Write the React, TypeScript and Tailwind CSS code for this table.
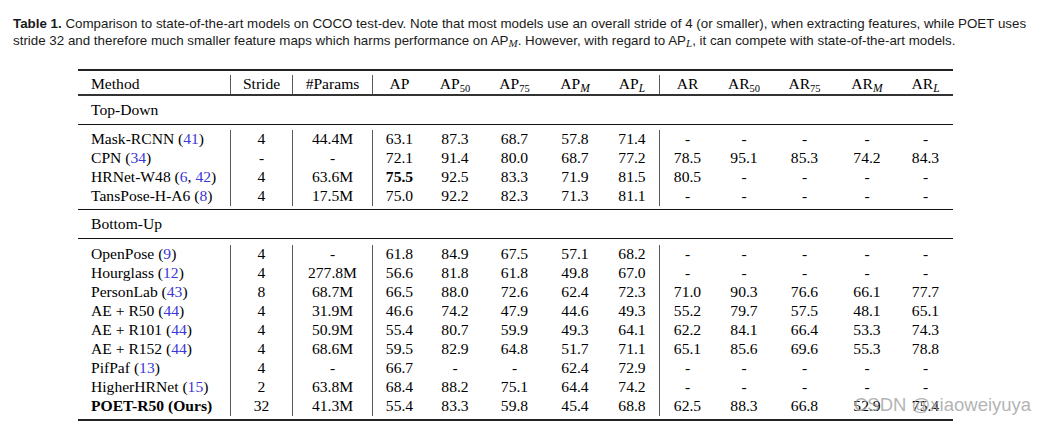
import React from "react";

type Row = {
  name: string;
  cites: string[];
  bold?: boolean;
  stride: string;
  params: string;
  vals: string[];
  boldIdx?: number[];
};

const topDown: Row[] = [
  { name: "Mask-RCNN", cites: ["41"], stride: "4", params: "44.4M", vals: ["63.1", "87.3", "68.7", "57.8", "71.4", "-", "-", "-", "-", "-"] },
  { name: "CPN", cites: ["34"], stride: "-", params: "-", vals: ["72.1", "91.4", "80.0", "68.7", "77.2", "78.5", "95.1", "85.3", "74.2", "84.3"] },
  { name: "HRNet-W48", cites: ["6", "42"], stride: "4", params: "63.6M", vals: ["75.5", "92.5", "83.3", "71.9", "81.5", "80.5", "-", "-", "-", "-"], boldIdx: [0] },
  { name: "TansPose-H-A6", cites: ["8"], stride: "4", params: "17.5M", vals: ["75.0", "92.2", "82.3", "71.3", "81.1", "-", "-", "-", "-", "-"] },
];

const bottomUp: Row[] = [
  { name: "OpenPose", cites: ["9"], stride: "4", params: "-", vals: ["61.8", "84.9", "67.5", "57.1", "68.2", "-", "-", "-", "-", "-"] },
  { name: "Hourglass", cites: ["12"], stride: "4", params: "277.8M", vals: ["56.6", "81.8", "61.8", "49.8", "67.0", "-", "-", "-", "-", "-"] },
  { name: "PersonLab", cites: ["43"], stride: "8", params: "68.7M", vals: ["66.5", "88.0", "72.6", "62.4", "72.3", "71.0", "90.3", "76.6", "66.1", "77.7"] },
  { name: "AE + R50", cites: ["44"], stride: "4", params: "31.9M", vals: ["46.6", "74.2", "47.9", "44.6", "49.3", "55.2", "79.7", "57.5", "48.1", "65.1"] },
  { name: "AE + R101", cites: ["44"], stride: "4", params: "50.9M", vals: ["55.4", "80.7", "59.9", "49.3", "64.1", "62.2", "84.1", "66.4", "53.3", "74.3"] },
  { name: "AE + R152", cites: ["44"], stride: "4", params: "68.6M", vals: ["59.5", "82.9", "64.8", "51.7", "71.1", "65.1", "85.6", "69.6", "55.3", "78.8"] },
  { name: "PifPaf", cites: ["13"], stride: "4", params: "-", vals: ["66.7", "-", "-", "62.4", "72.9", "-", "-", "-", "-", "-"] },
  { name: "HigherHRNet", cites: ["15"], stride: "2", params: "63.8M", vals: ["68.4", "88.2", "75.1", "64.4", "74.2", "-", "-", "-", "-", "-"] },
  { name: "POET-R50 (Ours)", cites: [], bold: true, stride: "32", params: "41.3M", vals: ["55.4", "83.3", "59.8", "45.4", "68.8", "62.5", "88.3", "66.8", "52.9", "75.4"] },
];

const GRID =
  "grid grid-cols-[152px_62px_80px_54px_58px_61px_60px_54px_56px_58px_63px_62px_55px]";
const VL = "border-l border-[#5a5a5a]";

function Method({ r }: { r: Row }) {
  if (r.bold) return <span className="font-bold">{r.name}</span>;
  return (
    <span>
      {r.name} (
      {r.cites.map((c, i) => (
        <React.Fragment key={i}>
          {i > 0 ? ", " : ""}
          <span className="text-[#3a36d8]">{c}</span>
        </React.Fragment>
      ))}
      )
    </span>
  );
}

function DataRow({ r }: { r: Row }) {
  return (
    <div className={`${GRID} h-[19px] leading-[17px]`}>
      <div className="pl-[13px] whitespace-nowrap">
        <Method r={r} />
      </div>
      <div className={`${VL} text-center`}>{r.stride}</div>
      <div className={`${VL} text-center`}>{r.params}</div>
      {r.vals.map((v, i) => (
        <div
          key={i}
          className={`text-center ${i === 0 || i === 5 ? VL : ""} ${
            r.boldIdx && r.boldIdx.includes(i) ? "font-bold" : ""
          }`}
        >
          {v}
        </div>
      ))}
    </div>
  );
}

function Sub({ children, italic }: { children: React.ReactNode; italic?: boolean }) {
  return (
    <sub className={`text-[10.5px] ${italic ? "italic text-[11.5px]" : ""}`}>{children}</sub>
  );
}

export default function App() {
  const headers: React.ReactNode[] = [
    <>AP</>,
    <>AP<Sub>50</Sub></>,
    <>AP<Sub>75</Sub></>,
    <>AP<Sub italic>M</Sub></>,
    <>AP<Sub italic>L</Sub></>,
    <>AR</>,
    <>AR<Sub>50</Sub></>,
    <>AR<Sub>75</Sub></>,
    <>AR<Sub italic>M</Sub></>,
    <>AR<Sub italic>L</Sub></>,
  ];
  return (
    <div className="relative w-[1045px] h-[425px] bg-white overflow-hidden">
      <div
        className="pl-[13px] pt-[16px] text-[13.35px] leading-[16.5px] text-[#1a1a1a] h-[69px] whitespace-nowrap"
        style={{ fontFamily: '"Liberation Sans", Arial, sans-serif' }}
      >
        <span className="font-bold">Table 1.</span> Comparison to state-of-the-art models on COCO
        test-dev. Note that most models use an overall stride of 4 (or smaller), when extracting
        features, while POET uses
        <br />
        stride 32 and therefore much smaller feature maps which harms performance on AP
        <sub className="italic text-[11px]" style={{ fontFamily: '"Liberation Serif", serif' }}>
          M
        </sub>
        . However, with regard to AP
        <sub className="italic text-[11px]" style={{ fontFamily: '"Liberation Serif", serif' }}>
          L
        </sub>
        , it can compete with state-of-the-art models.
      </div>

      <div
        className="ml-[78px] w-[875px] text-[15.6px] text-black"
        style={{ fontFamily: '"Liberation Serif", "Times New Roman", serif' }}
      >
        <div className="h-[2px] bg-[#222]" />
        <div className="pt-[4px]">
          <div className={`${GRID} h-[19px] leading-[17px]`}>
            <div className="pl-[13px]">Method</div>
            <div className={`${VL} text-center`}>Stride</div>
            <div className={`${VL} text-center`}>#Params</div>
            {headers.map((h, i) => (
              <div key={i} className={`text-center ${i === 0 || i === 5 ? VL : ""}`}>
                {h}
              </div>
            ))}
          </div>
        </div>
        <div className="h-[2px] bg-[#333]" />
        <div className="pt-[5px] pb-[6px] pl-[13px] h-[28px] leading-[17px]">Top-Down</div>
        <div className="h-px bg-[#111]" />
        <div className="pt-[5px] pb-[3px]">
          {topDown.map((r, i) => (
            <DataRow key={i} r={r} />
          ))}
        </div>
        <div className="h-px bg-[#111]" />
        <div className="pt-[5px] pb-[6px] pl-[13px] h-[28px] leading-[17px]">Bottom-Up</div>
        <div className="h-px bg-[#111]" />
        <div className="pt-[6px] pb-[3px]">
          {bottomUp.map((r, i) => (
            <DataRow key={i} r={r} />
          ))}
        </div>
        <div className="h-[2px] bg-[#222]" />
      </div>

      <div
        className="absolute left-[854px] top-[394px] text-[18.5px] leading-[22px] text-[#a0a0a0]/80 whitespace-nowrap"
        style={{ fontFamily: '"Liberation Sans", Arial, sans-serif' }}
      >
        CSDN @xiaoweiyuya
      </div>
    </div>
  );
}
